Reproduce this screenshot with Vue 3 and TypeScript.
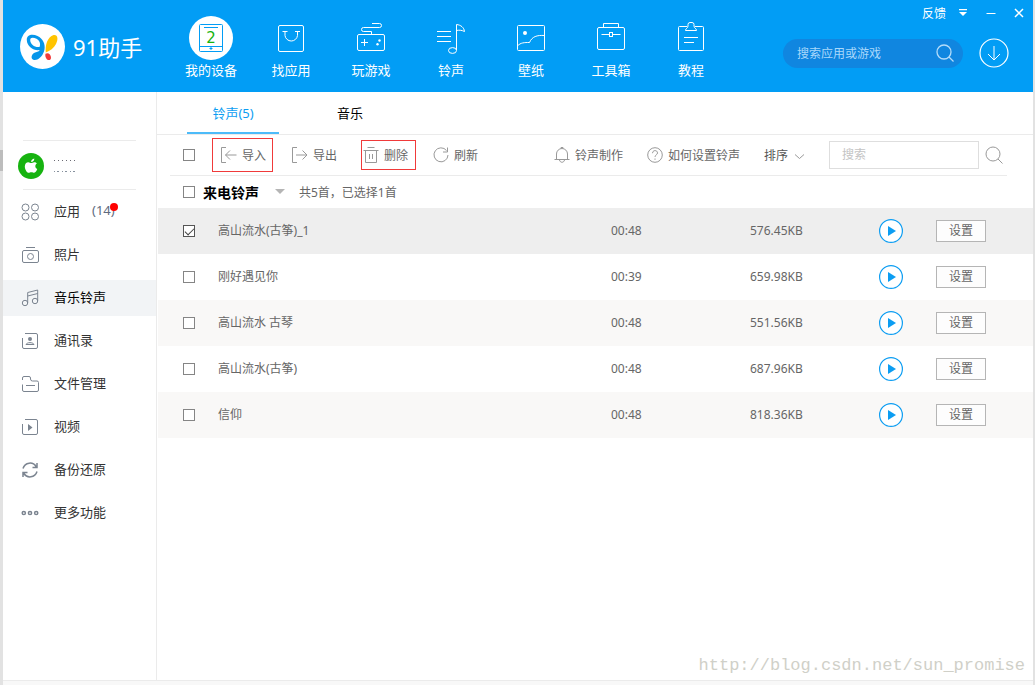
<script setup lang="ts">
import { computed, ref } from 'vue'

interface Tone {
  id: number
  name: string
  time: string
  size: string
  selected: boolean
}

const navItems = [
  { key: 'device', label: '我的设备' },
  { key: 'apps', label: '找应用' },
  { key: 'games', label: '玩游戏' },
  { key: 'tones', label: '铃声' },
  { key: 'wallpaper', label: '壁纸' },
  { key: 'tools', label: '工具箱' },
  { key: 'guide', label: '教程' },
]

const sideItems = [
  { key: 'apps', label: '应用', count: '(14)' },
  { key: 'photos', label: '照片' },
  { key: 'music', label: '音乐铃声' },
  { key: 'contacts', label: '通讯录' },
  { key: 'files', label: '文件管理' },
  { key: 'video', label: '视频' },
  { key: 'backup', label: '备份还原' },
  { key: 'more', label: '更多功能' },
]

const activeSide = ref('music')
const activeTab = ref('tones')
const appQuery = ref('')
const toneQuery = ref('')

const tones = ref<Tone[]>([
  { id: 1, name: '高山流水(古筝)_1', time: '00:48', size: '576.45KB', selected: true },
  { id: 2, name: '刚好遇见你', time: '00:39', size: '659.98KB', selected: false },
  { id: 3, name: '高山流水 古琴', time: '00:48', size: '551.56KB', selected: false },
  { id: 4, name: '高山流水(古筝)', time: '00:48', size: '687.96KB', selected: false },
  { id: 5, name: '信仰', time: '00:48', size: '818.36KB', selected: false },
])

const selectedCount = computed(() => tones.value.filter((t) => t.selected).length)
const allSelected = computed({
  get: () => selectedCount.value === tones.value.length,
  set: (on: boolean) => tones.value.forEach((t) => (t.selected = on)),
})
</script>

<template>
  <div class="desktop">
    <div class="window">
      <header class="header">
        <div class="brand">
          <svg class="logo" viewBox="0 0 45 45" aria-hidden="true">
            <circle cx="22.5" cy="22.5" r="22.5" fill="#fff" />
            <path fill="#0596ea" fill-rule="evenodd" d="M6.800 16C6.500 10.500 12.500 9.500 17.500 12C23 14.500 25.500 20 24.500 25.500C23.500 31 19 36.500 14 36C10.500 35.500 11 30.500 14.500 28.800C16.500 27.800 18.500 28 19.800 26C13.500 27 7 22.500 6.800 16ZM10.200 16C10.300 20.500 15 23.800 19.500 23C21 20 19.500 16.500 16.500 14.800C13.500 13.200 10.200 13 10.200 16Z" />
            <path fill="#ffc400" d="M25.800 28.500C25 21 27.500 13.500 33 11.300C38 10 38.500 15.500 36 20C34 24 30 27 25.800 28.500Z" />
            <path fill="#f23a3a" d="M25.500 29.800C28 28 31 30.500 31 33.500C31 37 27.500 36.500 26.300 34.500C25.400 33 25 31.500 25.500 29.800Z" />
          </svg>
          <span class="brand-name">91助手</span>
        </div>

        <nav class="nav">
          <a v-for="item in navItems" :key="item.key" class="nav-item" href="#">
            <svg class="nav-icon" viewBox="0 0 44 44" aria-hidden="true">
              <g v-if="item.key === 'device'" class="device">
                <circle cx="22" cy="22" r="22" fill="#fff" stroke="none" />
                <rect x="10.5" y="8.5" width="23" height="27" rx="1" />
                <path d="M15 11.500h14M10.500 30.500h23M20.500 32.500h3M22 31v3" />
                <text x="22" y="27" text-anchor="middle">2</text>
              </g>
              <g v-else-if="item.key === 'apps'">
                <rect x="9.5" y="9.5" width="25" height="26" rx="1.5" />
                <path d="M13.500 15.500h5M26 15.500h5M16 15.500v4a6.300 6.300 0 0 0 12.500 0v-4" />
              </g>
              <g v-else-if="item.key === 'games'">
                <rect x="8.5" y="18.5" width="27" height="16" rx="1.5" />
                <path d="M22.500 18.500v-3h-8a2 2 0 0 1 0-4h16a2 2 0 0 0 0-4h-7.500M12 26.500h7M15.500 23v7" />
                <circle class="dot" cx="30.500" cy="24.500" r="1.2" />
                <circle class="dot" cx="28.500" cy="28.200" r="1.200" />
              </g>
              <g v-else-if="item.key === 'tones'">
                <path d="M8 15.500h14M8 20.500h14M8 25.500h14M27.500 34V8.500C32 9 35 11.500 35.500 15.500C32.500 14 30 14 27.500 14.500" />
                <ellipse cx="23.500" cy="34.500" rx="4" ry="2.900" />
              </g>
              <g v-else-if="item.key === 'wallpaper'">
                <rect x="8.5" y="9.5" width="27" height="25" rx="1" />
                <circle class="dot" cx="16" cy="17" r="2" />
                <path d="M8.500 30C11.500 26.500 15.500 26.500 20.500 26.500C23 20.500 28 19 35.500 19.500" />
              </g>
              <g v-else-if="item.key === 'tools'">
                <rect x="8.5" y="11.5" width="27" height="22" rx="1.5" />
                <path d="M14.500 11.500v-4h15v4M12.500 18.500h8M23.500 18.500h8" />
                <rect x="20.5" y="16.5" width="3" height="4" />
              </g>
              <g v-else>
                <path d="M18 10.500h-7.500q-1 0-1 1v22q0 1 1 1h23q1 0 1-1v-22q0-1-1-1H26M16.500 14.500h11c0-2.500-2.500-2-2.500-4.500v-1.500q0-2-2-2h-2q-2 0-2 2V10c0 2.500-2.500 2-2.500 4.500ZM15 21.500h14M15 26.500h10" />
              </g>
            </svg>
            <span class="nav-label">{{ item.label }}</span>
          </a>
        </nav>

        <div class="header-side">
          <div class="window-controls">
            <a class="feedback" href="#">反馈</a>
            <button class="control" type="button" aria-label="菜单">
              <svg viewBox="0 0 12 12"><path fill="#fff" d="M2 2h8v1.300H2ZM2 5h8L6 9Z" /></svg>
            </button>
            <button class="control" type="button" aria-label="最小化">
              <svg viewBox="0 0 12 12"><path stroke="#fff" d="M1.500 6.500h9" /></svg>
            </button>
            <button class="control" type="button" aria-label="关闭">
              <svg viewBox="0 0 12 12"><path stroke="#fff" stroke-width="1.500" d="M2 2l8 8M10 2l-8 8" /></svg>
            </button>
          </div>
          <div class="search-row">
            <form class="app-search" @submit.prevent>
              <input v-model="appQuery" type="text" aria-label="搜索应用或游戏" placeholder="搜索应用或游戏" />
              <button type="submit" aria-label="搜索应用">
                <svg viewBox="0 0 18 18" fill="none" stroke="#b4dcfa" stroke-width="1.300"><circle cx="8" cy="8" r="7" /><path d="M13 13l4.500 4.500" /></svg>
              </button>
            </form>
            <button class="download" type="button" aria-label="下载">
              <svg viewBox="0 0 30 30" fill="none" stroke="#fff"><circle cx="15" cy="15" r="14" stroke-width="1.200" /><path d="M15 8v14M9 16l6 6l6-6" /></svg>
            </button>
          </div>
        </div>
      </header>

      <div class="body">
        <aside class="sidebar">
          <div class="device-card">
            <svg class="apple" viewBox="0 0 26 26" aria-hidden="true">
              <circle cx="13" cy="13" r="13" fill="#17b310" />
              <path fill="#fff" d="M16.300 5.500c.1 2-1.300 3.500-3.200 3.600C13 7.300 14.500 5.700 16.300 5.500ZM13.200 10c.8 0 1.700-.8 3.100-.8c1 0 2 .5 2.600 1.400c-2.300 1.400-1.900 4.500.4 5.500c-.6 1.700-1.800 3.700-3.100 3.700c-1 0-1.500-.6-2.800-.6s-1.800.6-2.800.6c-1.600 0-3.800-3.500-3.800-6.400c0-2.600 1.700-4.200 3.500-4.200c1.200 0 2.100.8 2.900.8Z" />
            </svg>
            <svg class="device-name" viewBox="0 0 26 14" aria-hidden="true">
              <path d="M1 1.500h24" stroke="#6b6b74" stroke-dasharray="1 3" />
              <path d="M1 12.500h24" stroke="#87919e" stroke-dasharray="1 2 2 3" />
            </svg>
          </div>
          <nav class="side-nav">
            <a
              v-for="item in sideItems"
              :key="item.key"
              class="side-item"
              :class="{ active: item.key === activeSide }"
              href="#"
              @click.prevent="activeSide = item.key"
            >
              <svg class="side-icon" viewBox="0 0 18 18" aria-hidden="true">
                <g v-if="item.key === 'apps'">
                  <circle cx="4.500" cy="4.500" r="3.500" /><circle cx="14" cy="4.500" r="3.500" />
                  <circle cx="4.500" cy="13.500" r="3.500" /><circle cx="14" cy="13.500" r="3.500" />
                </g>
                <g v-else-if="item.key === 'photos'">
                  <rect x="1.5" y="4.5" width="16" height="12" rx="1.5" />
                  <path d="M5 1.500h9" /><circle cx="9.500" cy="10.500" r="3" />
                </g>
                <g v-else-if="item.key === 'music'">
                  <circle cx="4" cy="14" r="2.700" /><circle cx="14" cy="12" r="2.700" />
                  <path d="M6.700 14V3.500L16.700 1v11M6.700 7L16.700 4.500" />
                </g>
                <g v-else-if="item.key === 'contacts'">
                  <path d="M4 1.500h11q1.500 0 1.500 1.500v12q0 1.500-1.500 1.500H3q-1.500 0-1.500-1.500V6M5 12.500c1-2.500 7-2.500 8 0Z" />
                  <circle class="solid" cx="9" cy="7" r="2" />
                </g>
                <g v-else-if="item.key === 'files'">
                  <path d="M1.500 5V3q0-1.500 1.500-1.500h5q1.500 0 1.500 1.500v1q0 2 2 2h4.500q1.500 0 1.500 1.500V15q0 1.500-1.500 1.500H3q-1.500 0-1.500-1.500V9.500M5 10.500h9" />
                </g>
                <g v-else-if="item.key === 'video'">
                  <path d="M4 1.500h11q1.500 0 1.500 1.500v12q0 1.500-1.500 1.500H3q-1.500 0-1.500-1.500V6" />
                  <path class="solid" d="M7 6l4.500 3.500L7 13Z" />
                </g>
                <g v-else-if="item.key === 'backup'" class="bold">
                  <path d="M2 7.500C4 1 12 .5 15 5.500M16 2v4.500h-4.500M16 10.500C14 17 6 17.500 3 12.500M2 16v-4.500h4.500" />
                </g>
                <g v-else class="bold">
                  <circle cx="2.800" cy="9" r="1.600" /><circle cx="9" cy="9" r="1.600" /><circle cx="15.200" cy="9" r="1.600" />
                </g>
              </svg>
              <span class="side-label">{{ item.label }}</span>
              <span v-if="item.count" class="side-label count">{{ item.count }}</span>
            </a>
          </nav>
        </aside>

        <main class="content">
          <div class="tabs" role="tablist">
            <button type="button" role="tab" :aria-selected="activeTab === 'tones'" class="tab" :class="{ active: activeTab === 'tones' }" @click="activeTab = 'tones'">铃声({{ tones.length }})</button>
            <button type="button" role="tab" :aria-selected="activeTab === 'music'" class="tab" :class="{ active: activeTab === 'music' }" @click="activeTab = 'music'">音乐</button>
          </div>

          <div class="toolbar">
            <input v-model="allSelected" class="check" type="checkbox" aria-label="全选" />
            <button class="tool import" type="button">
              <svg viewBox="0 0 16 16"><path d="M5 .5H.5v15H5M15.500 8H4.500M9 3.500L4.500 8L9 12.500" /></svg>导入
            </button>
            <button class="tool export" type="button">
              <svg viewBox="0 0 16 16"><path d="M5 .5H.5v15H5M4 8h11M10.500 3.500L15 8l-4.500 4.500" /></svg>导出
            </button>
            <button class="tool delete" type="button">
              <svg viewBox="0 0 16 16"><path d="M.5 3.500h15M4.500 .5h7M2.500 3.500v12h11v-12M6.500 7v5M9.500 7v5" /></svg>删除
            </button>
            <button class="tool" type="button">
              <svg viewBox="0 0 16 16"><path d="M13.500 3.500A7 7 0 1 0 15 8M14.500 .5v4.500H10" /></svg>刷新
            </button>
            <div class="tool-side">
              <button class="tool" type="button">
                <svg viewBox="0 0 16 16"><path d="M.5 12.500h15M2.500 12.500v-5.500a5.500 5.500 0 0 1 11 0v5.500M7 1.500v-1h2v1M5.500 13c.5 3 4.500 3 5 0" /></svg>铃声制作
              </button>
              <button class="tool" type="button">
                <svg viewBox="0 0 16 16"><circle cx="8" cy="8" r="7.300" /><path d="M5.500 6.200c0-3.500 5-3.300 5-.3c0 2-2.500 2-2.500 4M8 11.500v1.300" /></svg>如何设置铃声
              </button>
              <div class="sort">
                <select aria-label="排序方式"><option>排序</option></select>
                <svg viewBox="0 0 11 6"><path d="M1 .5L5.500 4.500L10 .5" /></svg>
              </div>
              <form class="tone-search" @submit.prevent>
                <input v-model="toneQuery" type="text" aria-label="搜索" placeholder="搜索" />
                <button type="submit" aria-label="搜索铃声">
                  <svg viewBox="0 0 18 18"><circle cx="8" cy="8" r="7" /><path d="M13 13l4.500 4.500" /></svg>
                </button>
              </form>
            </div>
          </div>

          <div class="group">
            <input id="group-check" v-model="allSelected" class="check" type="checkbox" />
            <label class="group-name" for="group-check">来电铃声</label>
            <button class="caret" type="button" aria-label="选择分类">
              <svg viewBox="0 0 10 6"><path fill="#b5b5b5" d="M0 0h10L5 5Z" /></svg>
            </button>
            <span>共{{ tones.length }}首，已选择{{ selectedCount }}首</span>
          </div>

          <table class="tones">
            <colgroup>
              <col class="col-check" /><col /><col class="col-time" /><col class="col-size" /><col class="col-play" /><col class="col-set" />
            </colgroup>
            <tbody>
              <tr v-for="tone in tones" :key="tone.id" :class="{ selected: tone.selected }">
                <td class="cell-check"><input v-model="tone.selected" class="check" type="checkbox" :aria-label="tone.name" /></td>
                <td class="cell-text">{{ tone.name }}</td>
                <td class="cell-text">{{ tone.time }}</td>
                <td class="cell-text">{{ tone.size }}</td>
                <td>
                  <button class="play" type="button" :aria-label="'播放 ' + tone.name">
                    <svg viewBox="0 0 24 24"><circle cx="12" cy="12" r="11.400" fill="#fff" stroke="#0c9df2" stroke-width="1.200" /><path fill="#0c9df2" d="M9 7l8 5l-8 5Z" /></svg>
                  </button>
                </td>
                <td><button class="set" type="button">设置</button></td>
              </tr>
            </tbody>
          </table>
        </main>
      </div>
      <footer class="status"></footer>
      <div class="watermark">http://blog.csdn.net/sun_promise</div>
    </div>
  </div>
</template>

<style>
body {
  margin: 0;
}
</style>

<style scoped>
.desktop,
.desktop * {
  box-sizing: border-box;
}
.desktop {
  display: flex;
  min-height: 100vh;
  padding: 0 2px 0 3px;
  background: linear-gradient(#bdbdbd, #bdbdbd) 0 150px / 3px 21px no-repeat, #e2e2e2;
  font-family: "Noto Sans", "Noto Sans CJK SC", sans-serif;
  font-size: 12px;
  color: #666;
}
.window {
  position: relative;
  display: flex;
  flex: 1;
  flex-direction: column;
  min-width: 0;
  background: #fff;
}
button {
  display: block;
  margin: 0;
  padding: 0;
  border: 0;
  background: none;
  color: inherit;
  font: inherit;
  cursor: pointer;
}
input,
select {
  margin: 0;
  font: inherit;
  outline: none;
}
a {
  color: inherit;
  text-decoration: none;
}
svg {
  display: block;
}

.header {
  display: flex;
  height: 92px;
  background: #029df5;
  color: #fff;
}
.brand {
  display: flex;
  align-items: center;
  gap: 8px;
  width: 168px;
  padding-left: 17px;
}
.logo {
  width: 45px;
  height: 45px;
}
.brand-name {
  font-size: 22px;
}
.nav {
  display: flex;
}
.nav-item {
  display: flex;
  flex-direction: column;
  align-items: center;
  width: 80px;
  padding-top: 16px;
}
.nav-icon {
  width: 44px;
  height: 44px;
  fill: none;
  stroke: #fff;
}
.nav-icon .device {
  stroke: #029df5;
}
.nav-icon text {
  fill: #17b310;
  stroke: none;
  font-family: "DejaVu Sans", sans-serif;
  font-size: 15px;
}
.nav-icon .dot {
  fill: #fff;
  stroke: none;
}
.nav-label {
  font-size: 13px;
  line-height: 20px;
}
.header-side {
  display: flex;
  flex-direction: column;
  align-items: flex-end;
  margin-left: auto;
}
.window-controls {
  display: flex;
  align-items: center;
  height: 26px;
  padding-right: 8px;
}
.feedback {
  margin-right: 11px;
}
.control {
  width: 12px;
}
.control + .control {
  margin-left: 16px;
}
.search-row {
  display: flex;
  align-items: center;
  gap: 16px;
  padding: 12px 24px 0 0;
}
.app-search {
  display: flex;
  align-items: center;
  width: 180px;
  height: 29px;
  padding: 0 9px 0 14px;
  border-radius: 15px;
  background: #1086e0;
}
.app-search input {
  flex: 1;
  min-width: 0;
  padding: 0;
  border: 0;
  background: none;
  color: #fff;
}
.app-search input::placeholder {
  color: #a9d8fb;
}
.app-search button {
  width: 18px;
}
.download {
  width: 30px;
}

.body {
  display: flex;
  flex: 1;
}
.sidebar {
  flex: none;
  width: 154px;
  padding-top: 48px;
  border-right: 1px solid #ebebeb;
}
.device-card {
  display: flex;
  align-items: center;
  gap: 9px;
  height: 50px;
  margin: 0 20px;
  padding-top: 2px;
  border: solid #ebebeb;
  border-width: 1px 0;
}
.apple {
  flex: none;
  width: 26px;
  height: 26px;
  margin-left: -5px;
}
.device-name {
  width: 26px;
  height: 14px;
}
.side-nav {
  display: flex;
  flex-direction: column;
  gap: 7px;
  padding-top: 4px;
}
.side-item {
  display: flex;
  align-items: center;
  height: 36px;
  padding-left: 18px;
  color: #333;
  font-size: 13px;
}
.side-item.active {
  background: #f2f4f6;
  color: #000;
}
.side-icon {
  width: 18px;
  height: 18px;
  margin-right: 15px;
  fill: none;
  stroke: #7b8490;
}
.side-icon .bold {
  stroke-width: 1.5;
}
.side-icon .solid {
  fill: #7b8490;
  stroke: none;
}
.side-label {
  padding-bottom: 4px;
}
.count {
  position: relative;
  margin-left: 12px;
  color: #5f6b80;
}
.count::after {
  content: "";
  position: absolute;
  top: 2px;
  right: -3px;
  width: 8px;
  height: 8px;
  border-radius: 50%;
  background: #f00;
}

.content {
  flex: 1;
  min-width: 0;
}
.tabs {
  display: flex;
  gap: 25px;
  height: 43px;
  padding-left: 30px;
  border-bottom: 1px solid #ebebeb;
}
.tab {
  width: 92px;
  border-bottom: 2px solid transparent;
  color: #000;
  font-size: 13px;
}
.tab.active {
  border-color: #4dbbf9;
  color: #0c9df2;
}
.toolbar {
  display: flex;
  align-items: center;
  gap: 17px;
  height: 41px;
  margin: 0 26px 0 13px;
  padding: 0 4px 0 13px;
  border-bottom: 1px solid #ebebeb;
}
.check {
  position: relative;
  flex: none;
  display: block;
  width: 12px;
  height: 12px;
  border: 1px solid #858585;
  background: #fff;
  appearance: none;
}
.check:checked {
  border-color: #555;
}
.check:checked::after {
  content: "";
  position: absolute;
  top: 2px;
  left: 1px;
  width: 8px;
  height: 4px;
  border: solid #444;
  border-width: 0 0 1px 1px;
  transform: rotate(-45deg);
}
.tool {
  display: flex;
  align-items: center;
  gap: 5px;
  white-space: nowrap;
}
.tool svg {
  width: 16px;
  height: 16px;
}
.toolbar svg {
  fill: none;
  stroke: #999;
}
.import {
  height: 34px;
  padding: 0 6px 0 8px;
  border: 1px solid #f03a3a;
}
.export {
  margin: 0 7px 0 2px;
}
.delete {
  height: 30px;
  padding: 0 7px 0 1px;
  border: 1px solid #f03a3a;
}
.tool-side {
  display: flex;
  align-items: center;
  gap: 24px;
  margin-left: auto;
}
.sort {
  position: relative;
  width: 41px;
}
.sort select {
  display: block;
  width: 100%;
  padding: 0;
  border: 0;
  background: none;
  color: #555;
  appearance: none;
}
.sort svg {
  position: absolute;
  top: 7px;
  right: 0;
  width: 11px;
  height: 6px;
  pointer-events: none;
}
.tone-search {
  display: flex;
  align-items: center;
  gap: 6px;
}
.tone-search input {
  width: 150px;
  height: 28px;
  padding: 0 12px 2px;
  border: 1px solid #dedede;
  background: #fff;
}
.tone-search input::placeholder {
  color: #c4c4c4;
}
.tone-search button {
  width: 18px;
}
.group {
  display: flex;
  align-items: center;
  height: 32px;
  padding-left: 26px;
}
.group-name {
  margin: 0 16px 0 8px;
  color: #000;
  font-size: 14px;
  font-weight: 700;
}
.caret {
  width: 10px;
  margin-right: 14px;
}
.tones {
  width: calc(100% - 1px);
  margin-left: 1px;
  border-collapse: collapse;
  table-layout: fixed;
}
.col-check { width: 60px; }
.col-time { width: 139px; }
.col-size { width: 129px; }
.col-play { width: 57px; }
.col-set { width: 97px; }
.tones td {
  height: 46px;
  padding: 0;
}
.tones tr:nth-child(odd) {
  background: #f9f8f7;
}
.tones tr.selected {
  background: #eee;
}
.tones .cell-check {
  padding-left: 25px;
}
.tones .cell-text {
  padding-bottom: 2px;
}
.play {
  width: 24px;
}
.set {
  width: 50px;
  height: 22px;
  padding-bottom: 2px;
  border: 1px solid #b5b5b5;
  background: #fdfdfd;
}
.status {
  height: 5px;
  border-top: 1px solid #ebebeb;
  background: #f8f8f8;
}
.watermark {
  position: absolute;
  right: 8px;
  bottom: 9px;
  color: #d0d0c8;
  font-family: "Liberation Mono", monospace;
  font-size: 17px;
  line-height: 20px;
}
</style>
